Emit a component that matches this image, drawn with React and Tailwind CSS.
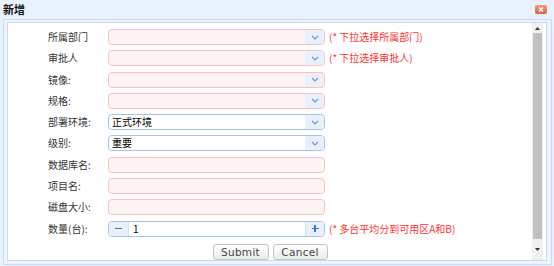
import React from "react";

const font = { fontFamily: '"Noto Sans CJK SC", "Noto Sans", sans-serif' };

const Chevron = () => (
  <svg width="8" height="5" viewBox="0 0 8 5">
    <path d="M1 1 L4 4 L7 1" fill="none" stroke="#6b9ad8" strokeWidth="1.2" />
  </svg>
);

const Combo = ({ value, invalid }) => (
  <div
    className={
      "flex h-[16px] w-[217px] overflow-hidden rounded-[4px] border " +
      (invalid ? "border-[#ffbfbf] bg-[#fff3f3]" : "border-[#a6c3ea] bg-white")
    }
  >
    <div className="flex-1 pl-[3px] text-[10px] leading-[14px] text-black">{value}</div>
    <div className="flex w-[19px] items-center justify-center bg-[#e9f0fb]">
      <Chevron />
    </div>
  </div>
);

const Text = () => (
  <div className="h-[16px] w-[217px] rounded-[4px] border border-[#ffbfbf] bg-[#fff3f3]"></div>
);

const Spinner = () => (
  <div className="flex h-[16px] w-[217px] overflow-hidden rounded-[4px] border border-[#a6c3ea] bg-white">
    <div className="flex w-[20px] items-center justify-center border-r border-[#d3e1f4] bg-[#e9f0fb]">
      <span className="block h-[1.5px] w-[7px] bg-[#2f7ad6]"></span>
    </div>
    <div className="flex-1 pl-[4px] text-[10px] leading-[14px] text-black">1</div>
    <div className="relative flex w-[19px] items-center justify-center border-l border-[#d3e1f4] bg-[#e9f0fb]">
      <span className="absolute h-[1.5px] w-[7px] bg-[#2f7ad6]"></span>
      <span className="absolute h-[7px] w-[1.5px] bg-[#2f7ad6]"></span>
    </div>
  </div>
);

const Row = ({ label, children, hint }) => (
  <div className="flex h-[16px] items-center">
    <div className="w-[60px] text-[10px] leading-[16px] text-[#333]">{label}</div>
    {children}
    {hint && <div className="ml-[4px] text-[10px] leading-[16px] text-[#f33]">{hint}</div>}
  </div>
);

const Btn = ({ children, w }) => (
  <button
    className={
      "h-[16px] rounded-[3px] border border-[#c4c4c4] bg-gradient-to-b from-white to-[#ececec] text-[10.5px] leading-[14px] tracking-[0.3px] text-[#444] " +
      w
    }
    style={{ fontFamily: '"DejaVu Sans", Verdana, sans-serif' }}
  >
    {children}
  </button>
);

export default function App() {
  return (
    <div className="h-[266px] w-[554px] overflow-hidden bg-[#e9f1fc]" style={font}>
      {/* title */}
      <div className="flex h-[19px] items-center justify-between pl-[3px] pr-[7px]">
        <span className="text-[11px] font-bold text-[#111]">新增</span>
        <span className="flex h-[9px] w-[12px] items-center justify-center rounded-[2px] bg-gradient-to-b from-[#f09a7e] to-[#d9643f]">
          <svg width="6" height="5" viewBox="0 0 6 5">
            <path d="M1 0.5 L5 4.5 M5 0.5 L1 4.5" stroke="white" strokeWidth="1.3" />
          </svg>
        </span>
      </div>

      {/* panel */}
      <div className="ml-[3px] h-[246px] w-[549px] border border-[#c7daf2] bg-[#eef4fd] pb-[3px] pl-[3px] pr-[4px] pt-[2px]">
        <div className="flex h-[239px] border border-[#c7daf2] bg-white">
          <div className="flex flex-1 flex-col pl-[40px] pt-[6px]">
            <div className="flex flex-col gap-[5.3px]">
              <Row label="所属部门" hint="(* 下拉选择所属部门)">
                <Combo invalid />
              </Row>
              <Row label="审批人" hint="(* 下拉选择审批人)">
                <Combo invalid />
              </Row>
              <Row label="镜像:">
                <Combo invalid />
              </Row>
              <Row label="规格:">
                <Combo invalid />
              </Row>
              <Row label="部署环境:">
                <Combo value="正式环境" />
              </Row>
              <Row label="级别:">
                <Combo value="重要" />
              </Row>
              <Row label="数据库名:">
                <Text />
              </Row>
              <Row label="项目名:">
                <Text />
              </Row>
              <Row label="磁盘大小:">
                <Text />
              </Row>
              <Row label="数量(台):" hint="(* 多台平均分到可用区A和B)">
                <Spinner />
              </Row>
            </div>
            <div className="mt-[7px] flex justify-center gap-[4px] pr-[40px]">
              <Btn w="w-[56px]">Submit</Btn>
              <Btn w="w-[55px]">Cancel</Btn>
            </div>
          </div>

          {/* scrollbar */}
          <div className="mr-[3px] flex w-[11px] flex-col bg-[#f1f1f1]">
            <div className="flex h-[10px] items-center justify-center">
              <svg width="5" height="3" viewBox="0 0 5 3">
                <path d="M0 3 L2.5 0 L5 3 Z" fill="#333" />
              </svg>
            </div>
            <div className="mx-[1px] h-[206px] bg-[#c1c1c1]"></div>
            <div className="flex flex-1 items-center justify-center">
              <svg width="5" height="3" viewBox="0 0 5 3">
                <path d="M0 0 L2.5 3 L5 0 Z" fill="#333" />
              </svg>
            </div>
          </div>
        </div>
      </div>
    </div>
  );
}
